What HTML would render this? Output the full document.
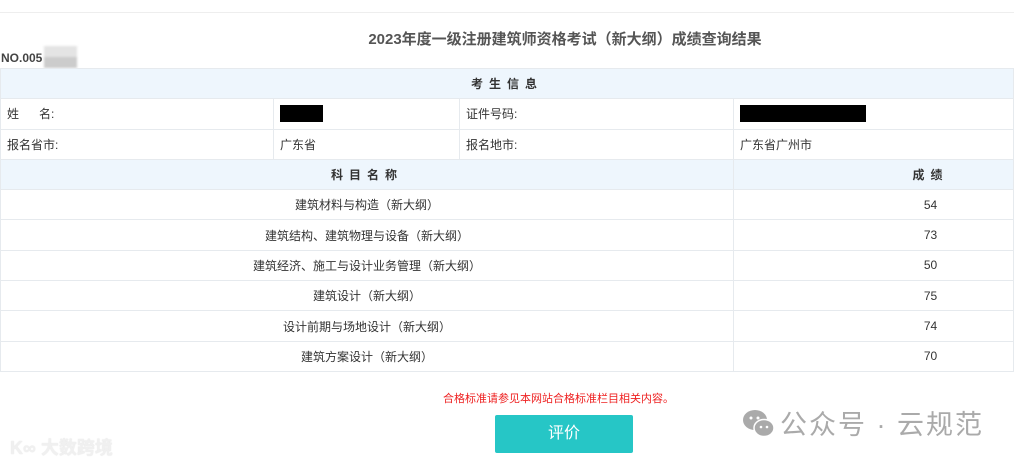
<!DOCTYPE html>
<html><head><meta charset="utf-8">
<style>
body{margin:0;width:1014px;height:464px;background:#fff;font-family:"Liberation Sans","Noto Sans CJK SC",sans-serif;position:relative;overflow:hidden;color:#333}
.topbar{position:absolute;left:0;top:0;width:1014px;height:12px;border-bottom:1px solid #eee}
.title{position:absolute;left:0;width:1130px;top:28px;text-align:center;font-size:15px;font-weight:bold;color:#555}
.no{position:absolute;left:1px;top:51px;font-size:12px;font-weight:bold;color:#444}
.blur{position:absolute;left:44px;top:46px;width:33px;height:22px;background:linear-gradient(#e4e4e4 50%,#ccc 50%);filter:blur(1px)}
table{position:absolute;left:0;top:68px;width:1014px;border-collapse:collapse;font-size:12px}
td{border:1px solid #e6eaee;height:29.3px;padding:0 6px;color:#333}
.h{background:#eef6fd;text-align:center;font-weight:bold;letter-spacing:6px}
.c{text-align:center}
.s{padding-left:120px}
.blk{display:inline-block;background:#000;height:17px;vertical-align:middle}
.note{position:absolute;left:443px;top:390px;font-size:11px;color:#e22}
.btn{position:absolute;left:495px;top:415px;width:138px;height:38px;background:#26c6c6;border-radius:2px;color:#fff;font-size:16px;text-align:center;line-height:38px}
.wx{position:absolute;left:780px;top:403px;font-size:27px;color:#aaa;letter-spacing:2px}
.wm{position:absolute;left:10px;top:434px;font-size:18px;color:#f0f0f0;font-weight:bold;text-shadow:0 0 1px #ddd}
</style></head><body>
<div class="topbar"></div>
<div class="title">2023年度一级注册建筑师资格考试（新大纲）成绩查询结果</div>
<div class="no">NO.005</div><div class="blur"></div>
<table>
<tr><td colspan="4" class="h">考生信息</td></tr>
<tr><td style="width:260px">姓&nbsp;&nbsp;&nbsp;&nbsp;&nbsp;&nbsp;名:</td><td style="width:173px"><span class="blk" style="width:43px"></span></td><td style="width:261px">证件号码:</td><td><span class="blk" style="width:126px"></span></td></tr>
<tr><td>报名省市:</td><td>广东省</td><td>报名地市:</td><td>广东省广州市</td></tr>
<tr><td colspan="3" class="h">科目名称</td><td class="h s">成绩</td></tr>
<tr><td colspan="3" class="c">建筑材料与构造（新大纲）</td><td class="c s">54</td></tr>
<tr><td colspan="3" class="c">建筑结构、建筑物理与设备（新大纲）</td><td class="c s">73</td></tr>
<tr><td colspan="3" class="c">建筑经济、施工与设计业务管理（新大纲）</td><td class="c s">50</td></tr>
<tr><td colspan="3" class="c">建筑设计（新大纲）</td><td class="c s">75</td></tr>
<tr><td colspan="3" class="c">设计前期与场地设计（新大纲）</td><td class="c s">74</td></tr>
<tr><td colspan="3" class="c">建筑方案设计（新大纲）</td><td class="c s">70</td></tr>
</table>
<div class="note">合格标准请参见本网站合格标准栏目相关内容。</div>
<div class="btn">评价</div>
<svg style="position:absolute;left:742px;top:409px" width="34" height="30" viewBox="0 0 34 30"><ellipse cx="13" cy="11" rx="12" ry="10" fill="#aaa"/><ellipse cx="22" cy="19" rx="10" ry="8.5" fill="#aaa" stroke="#fff" stroke-width="1.5"/><circle cx="9" cy="9" r="1.5" fill="#fff"/><circle cx="16" cy="9" r="1.5" fill="#fff"/><circle cx="19" cy="18" r="1.3" fill="#fff"/><circle cx="25" cy="18" r="1.3" fill="#fff"/></svg>
<div class="wx">公众号 · 云规范</div>
<div class="wm">K∞ 大数跨境</div>
</body></html>
